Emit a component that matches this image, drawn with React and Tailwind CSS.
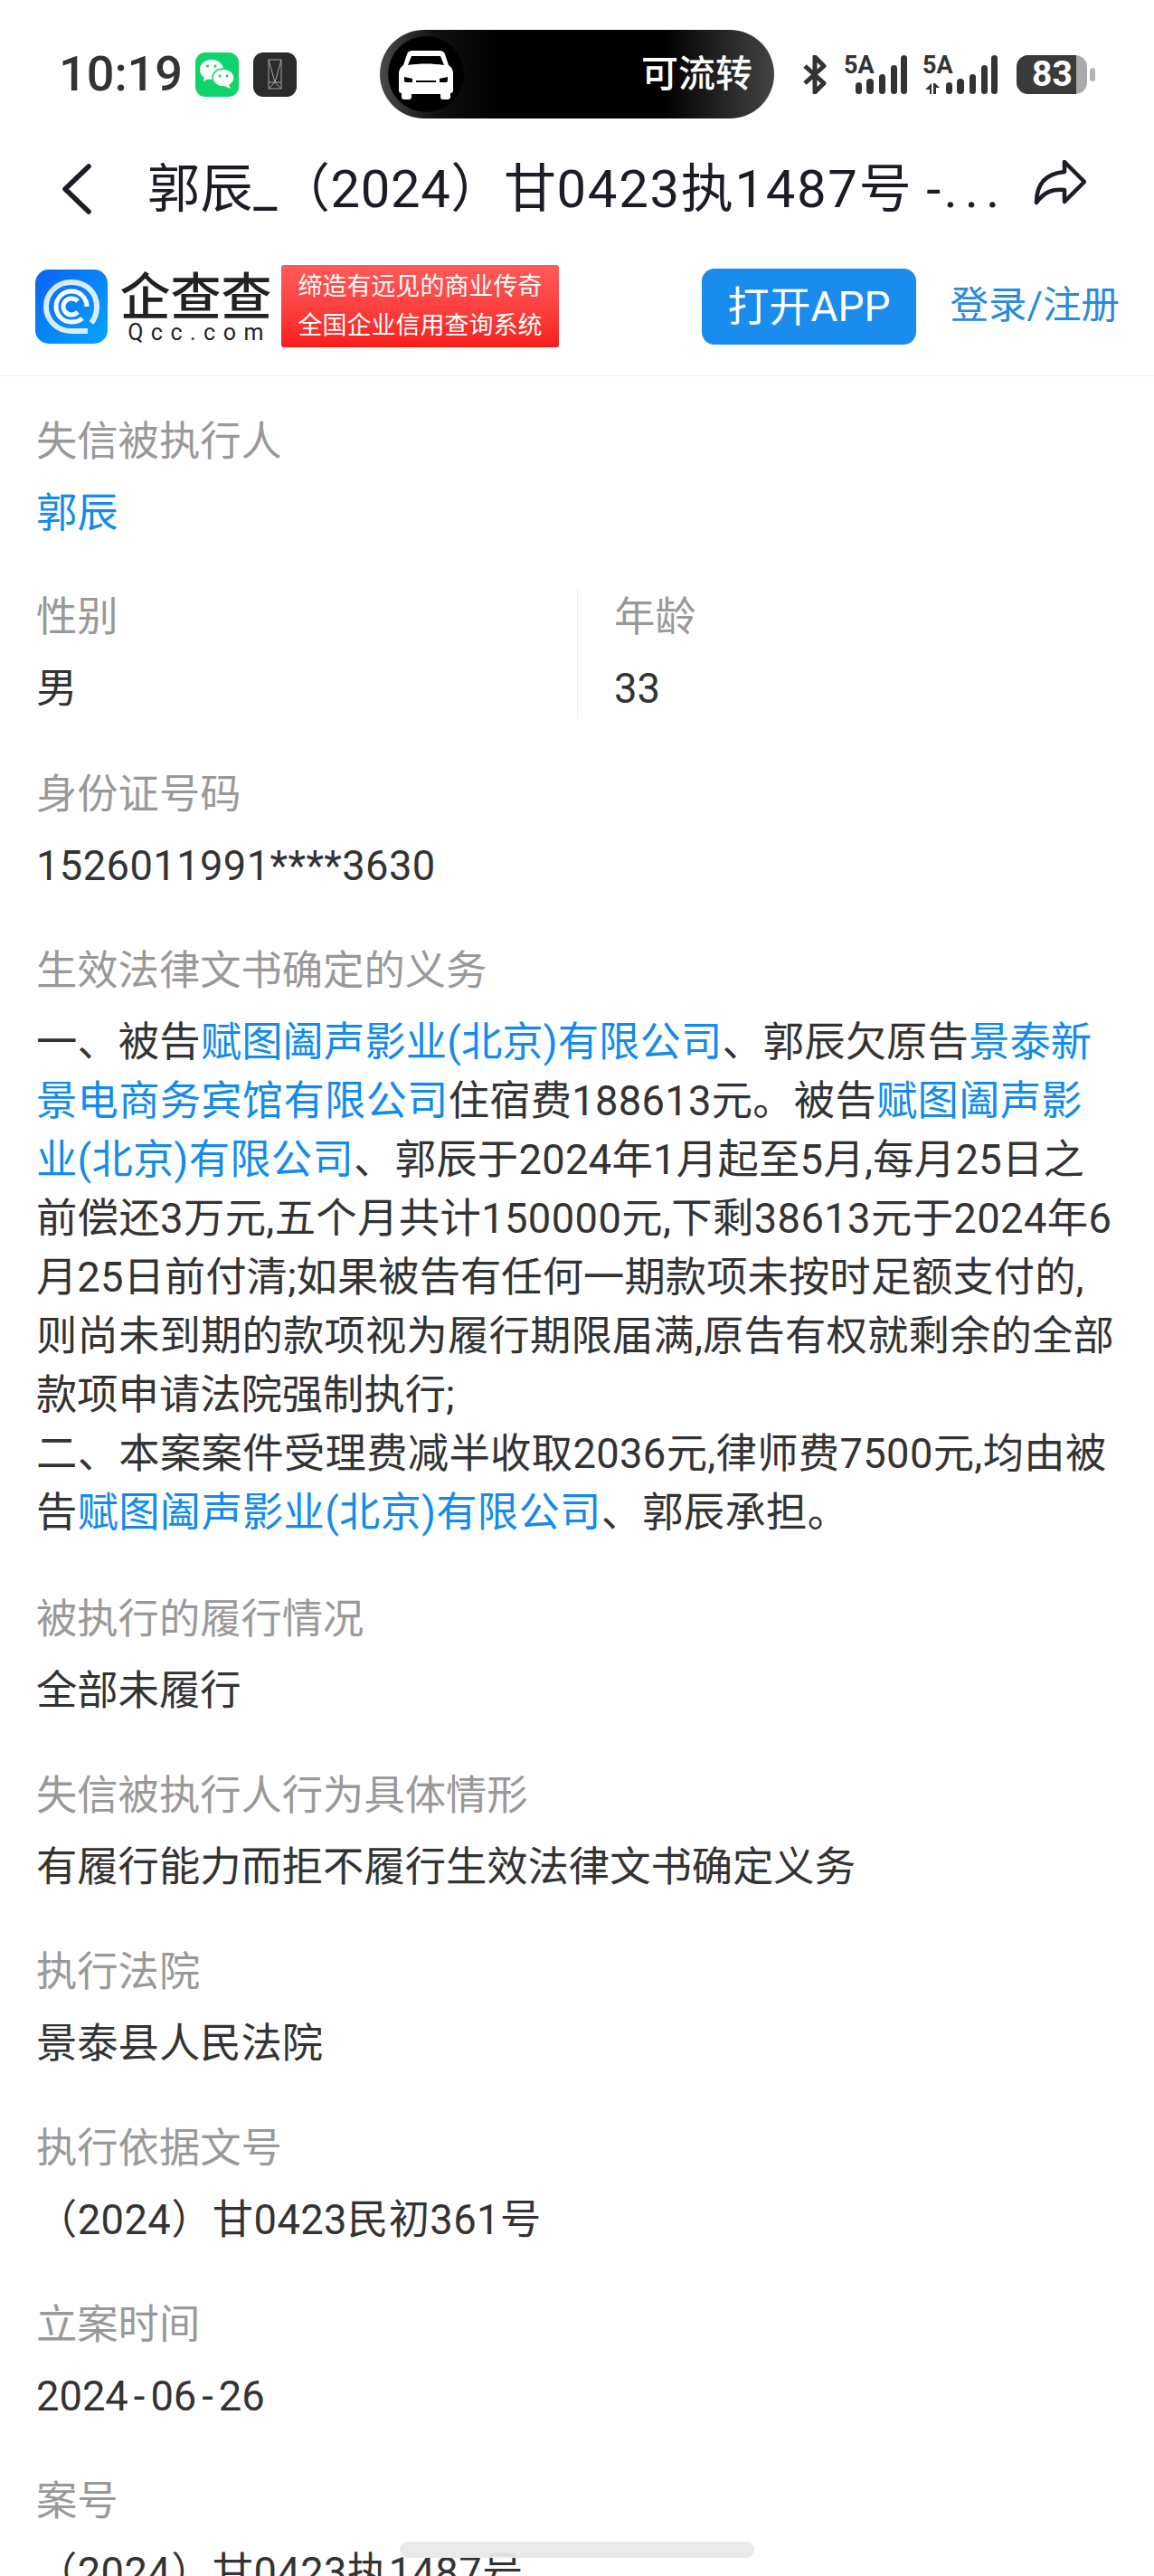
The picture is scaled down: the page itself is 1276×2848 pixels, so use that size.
const font = "font-['Roboto','Noto_Sans_CJK_SC',sans-serif]";

function Link({ children }) {
  return <span className="text-[#128bed]">{children}</span>;
}

function Field({ label, children, className = "", valueClass = "" }) {
  return (
    <div className={`flex flex-col gap-[14px] ${className}`}>
      <div className="text-[#999999] whitespace-nowrap">{label}</div>
      <div className={`text-[#333333] ${valueClass}`}>{children}</div>
    </div>
  );
}

function Signal({ arrows }) {
  const w = arrows ? 85 : 70;
  return (
    <svg width={w} height="43" viewBox={`0 0 ${w} 43`} fill="#333" className="overflow-visible">
      <text x="0" y="20" fontSize="27" fontWeight="700" fontFamily="Roboto">5A</text>
      {arrows && <path d="M3 38l7-7v12h-2v-5zM12 43V31l2 0 5 5h-4v7z" />}
      <g transform={arrows ? "translate(13 0)" : ""}>
        <rect x="13" y="30" width="7" height="13" rx="3.5" />
        <rect x="25" y="26" width="8" height="17" rx="4" />
        <rect x="39" y="21" width="7" height="22" rx="3.5" />
        <rect x="52" y="11" width="7" height="32" rx="3.5" />
        <rect x="63" y="0" width="7" height="43" rx="3.5" />
      </g>
    </svg>
  );
}

function StatusBar() {
  return (
    <div className="h-[131px] pt-[33px] pl-[65px] flex items-center">
      <span className="text-[54px] leading-none font-medium text-[#333333] w-[151px]">10:19</span>
      <div className="w-[48px] h-[49px] rounded-[11px] bg-[#0fd46c] flex items-center justify-center">
        <svg width="40" height="36" viewBox="0 0 40 36" fill="#fff">
          <ellipse cx="14" cy="13" rx="13" ry="11" />
          <path d="M6 20l-1 6 7-4z" />
          <ellipse cx="27" cy="22" rx="12" ry="10" stroke="#0fd46c" strokeWidth="1.5" />
          <path d="M33 29l2 5-7-3z" />
          <circle cx="9.5" cy="9" r="1.6" fill="#0fd46c" />
          <circle cx="18" cy="9" r="1.6" fill="#0fd46c" />
          <circle cx="23" cy="20" r="1.5" fill="#0fd46c" />
          <circle cx="31" cy="20" r="1.5" fill="#0fd46c" />
        </svg>
      </div>
      <div className="ml-[16px] w-[48px] h-[49px] rounded-[11px] bg-[#2b2b2b] flex items-center justify-center">
        <svg width="16" height="34" viewBox="0 0 16 34" fill="none" stroke="#a5a5a5" strokeWidth="1">
          <path d="M1 1h14v32H1zM1 1l7 25 7-25M1 33l7-7 7 7M1 26h14" />
        </svg>
      </div>
      <div className="ml-[92px] w-[436px] h-[98px] rounded-[49px] bg-[linear-gradient(90deg,#4a4a4a_0%,#111111_14%,#000000_30%,#000000_72%,#444444_100%)] flex items-center pl-[9px] pr-[24px] justify-between">
        <div className="w-[84px] h-[84px] rounded-full bg-black flex items-center justify-center">
          <svg width="62" height="56" viewBox="0 0 62 56" fill="#fff">
            <path d="M16 2h30c3 0 5 1 6 4l4 12c3 2 5 5 5 9v19c0 2-1 3-3 3v4c0 2-1 3-3 3h-5c-2 0-3-1-3-3v-3H15v3c0 2-1 3-3 3H7c-2 0-3-1-3-3v-4c-2 0-3-1-3-3V27c0-4 2-7 5-9l4-12c1-3 3-4 6-4z" />
            <path d="M15 8h32l4 10c-13-2-27-2-40 0z" fill="#000" />
            <path d="M7 31l9 2v4H9c-2 0-2-1-2-6zM55 31l-9 2v4h7c2 0 2-1 2-6z" fill="#000" />
            <rect x="20" y="35" width="22" height="2" fill="#000" />
          </svg>
        </div>
        <span className="text-[41px] text-white leading-none font-medium">可流转</span>
      </div>
      <div className="ml-[31px] flex items-center">
        <svg width="28" height="43" viewBox="0 0 28 43" fill="none" stroke="#333" strokeWidth="5" strokeLinejoin="round">
          <path d="M3 12l21 19-10 10V2l10 10L3 31" />
        </svg>
        <div className="ml-[18px]"><Signal /></div>
        <div className="ml-[17px]"><Signal arrows /></div>
        <div className="ml-[19px] relative w-[78px] h-[43px] rounded-[13px] bg-[#aaaaaa] flex items-center">
          <div className="w-[66px] h-full bg-[#3a3a3a] rounded-l-[13px]" />
          <span className="absolute left-[17px] text-[39px] leading-none font-bold text-white">83</span>
        </div>
        <div className="ml-[3px] w-[6px] h-[15px] rounded-full bg-[#b5b5b5]" />
      </div>
    </div>
  );
}

function TitleBar() {
  return (
    <div className="h-[129px] flex items-center pl-[69px] pt-[27px] text-[#1a1c26]">
      <svg className="shrink-0" width="32" height="56" viewBox="0 0 32 56" fill="none" stroke="#1a1c26" strokeWidth="5.5" strokeLinecap="round" strokeLinejoin="round">
        <path d="M29 3L3 28l26 25" />
      </svg>
      <span className="ml-[62px] text-[58px] leading-none whitespace-nowrap tracking-[0.6px]">
        郭辰_（2024）甘<span className="tracking-[1.7px]">0423执1487号</span> <span className="tracking-[3px]">-</span><span className="tracking-[8px]">...</span>
      </span>
      <svg className="ml-[30px] -mt-[15px] shrink-0" width="58" height="50" viewBox="0 0 58 50" fill="none" stroke="#1a1c26" strokeWidth="4.5" strokeLinejoin="round" strokeLinecap="round">
        <path d="M34 2l22 22-22 22V33C20 32 12 35 3 47 3 28 12 15 34 13z" />
      </svg>
    </div>
  );
}

function QccLogo() {
  return (
    <svg width="80" height="82" viewBox="0 0 80 82" fill="none" className="shrink-0">
      <defs>
        <linearGradient id="qcc" x1="0" y1="0" x2="1" y2="1">
          <stop offset="0" stopColor="#0a63f5" />
          <stop offset="1" stopColor="#06a6fb" />
        </linearGradient>
      </defs>
      <rect width="80" height="82" rx="15" fill="url(#qcc)" />
      <g stroke="#fff" fill="none">
        <path d="M58 68H40C23 68 12 55 12 41S23 14 40 14s28 12 28 27c0 7-2 13-6 18" strokeWidth="6" opacity="0.85" />
        <path d="M52 54c-3 3-7 4-12 4-10 0-17-8-17-17s7-17 17-17 17 8 17 17" strokeWidth="5" />
        <path d="M47 35c-2-2-4-3-7-3-5 0-9 4-9 9s4 9 9 9c3 0 5-1 7-3" strokeWidth="5" />
      </g>
    </svg>
  );
}

function Header() {
  return (
    <div className="h-[156px] border-b border-[#eeeeee] flex items-center pl-[39px] pr-[38px] pt-[2px]">
      <QccLogo />
      <div className="ml-[15px] w-[165px] flex flex-col items-center pt-[6px]">
        <span className="text-[56px] leading-[52px] text-[#222222] font-medium whitespace-nowrap">企查查</span>
        <span className="text-[25px] leading-[24px] text-[#222222] tracking-[8.5px] mr-[-8px] mt-[1px] whitespace-nowrap">Qcc.com</span>
      </div>
      <div className="ml-[12px] w-[307px] h-[91px] rounded-[3px] bg-gradient-to-b from-[#ff5a5a] to-[#f81a1a] flex flex-col items-center justify-center text-white text-[27px] leading-[43px] whitespace-nowrap">
        <span>缔造有远见的商业传奇</span>
        <span>全国企业信用查询系统</span>
      </div>
      <button className="ml-[158px] w-[237px] h-[84px] rounded-[14px] bg-[#1a8cee] text-white text-[46px] leading-none">打开APP</button>
      <span className="ml-auto text-[42.5px] leading-none text-[#2a8bdc] whitespace-nowrap">登录/注册</span>
    </div>
  );
}

export default function App() {
  return (
    <div className={`relative w-[1276px] h-[2848px] overflow-hidden bg-white ${font}`}>
      <StatusBar />
      <TitleBar />
      <Header />
      <div className="px-[40px] pt-[40px] flex flex-col gap-[51px] text-[45.3px] leading-[65px]">
        <Field label="失信被执行人" className="-mb-[1px]"><Link>郭辰</Link></Field>
        <div className="flex mb-[1px]">
          <Field label="性别" className="w-[599px] border-r border-[#eeeeee]">男</Field>
          <Field label="年龄" className="pl-[40px]">33</Field>
        </div>
        <Field label="身份证号码" valueClass="tracking-[0.4px]">1526011991****3630</Field>
        <Field label="生效法律文书确定的义务" className="mb-[2px]" valueClass="whitespace-nowrap">
          <div className="tracking-[0.13px]">一、被告<Link>赋图阖声影业(北京)有限公司</Link>、郭辰欠原告<Link>景泰新</Link></div>
          <div className="tracking-[0.27px]"><Link>景电商务宾馆有限公司</Link>住宿费188613元。被告<Link>赋图阖声影</Link></div>
          <div className="tracking-[0.3px]"><Link>业(北京)有限公司</Link>、郭辰于2024年1月起至5月,每月25日之</div>
          <div className="tracking-[0.4px]">前偿还3万元,五个月共计150000元,下剩38613元于2024年6</div>
          <div className="tracking-[0.07px]">月25日前付清;如果被告有任何一期款项未按时足额支付的,</div>
          <div className="tracking-[0.2px]">则尚未到期的款项视为履行期限届满,原告有权就剩余的全部</div>
          <div>款项申请法院强制执行;</div>
          <div className="tracking-[0.35px]">二、本案案件受理费减半收取2036元,律师费7500元,均由被</div>
          <div className="tracking-[0.3px]">告<Link>赋图阖声影业(北京)有限公司</Link>、郭辰承担。</div>
        </Field>
        <Field label="被执行的履行情况">全部未履行</Field>
        <Field label="失信被执行人行为具体情形">有履行能力而拒不履行生效法律文书确定义务</Field>
        <Field label="执行法院">景泰县人民法院</Field>
        <Field label="执行依据文号" valueClass="tracking-[0.4px]">（2024）甘0423民初361号</Field>
        <Field label="立案时间">2024<span className="mx-[6px]">-</span>06<span className="mx-[6px]">-</span>26</Field>
        <Field label="案号" valueClass="tracking-[0.4px]">（2024）甘0423执1487号</Field>
      </div>
      <div className="absolute left-[442px] top-[2810px] w-[392px] h-[18px] rounded-full bg-[#e9e9e9]/95" />
    </div>
  );
}
